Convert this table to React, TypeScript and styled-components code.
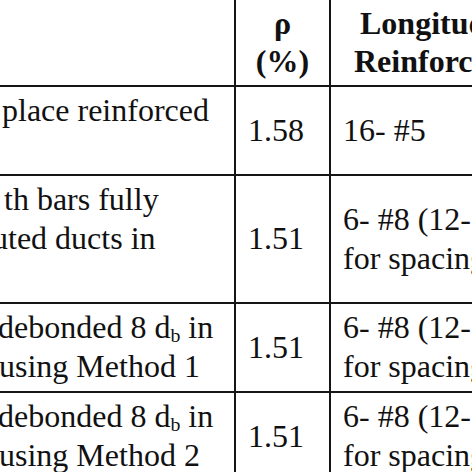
import React from 'react';
import styled, { createGlobalStyle } from 'styled-components';

const GlobalStyle = createGlobalStyle`
  html, body {
    margin: 0;
    padding: 0;
    background: #ffffff;
    overflow: hidden;
  }
`;

const serif = `'Liberation Serif', 'Times New Roman', Times, serif`;

const Page = styled.div`
  width: 472px;
  height: 472px;
  overflow: hidden;
  background: #ffffff;
`;

const Sheet = styled.div`
  margin-top: -2px;
`;

const Table = styled.table`
  border-collapse: collapse;
  table-layout: fixed;
  width: 640px;
  font-family: ${serif};
  font-size: 32px;
  line-height: 39px;
  color: #111111;
`;

const HeadCell = styled.th<{ $first?: boolean; $align?: 'left' | 'center' }>`
  font-family: ${serif};
  font-size: 32px;
  line-height: 38px;
  font-weight: bold;
  border: 2px solid #151515;
  border-top: none;
  border-left: ${(p) => (p.$first ? 'none' : '2px solid #151515')};
  padding: 6px 12px 5px;
  text-align: ${(p) => p.$align ?? 'center'};
  vertical-align: middle;
  white-space: nowrap;
  overflow: hidden;
`;

const Cell = styled.td<{ $first?: boolean }>`
  font-family: ${serif};
  font-size: 32px;
  line-height: 39px;
  border: 2px solid #151515;
  border-left: ${(p) => (p.$first ? 'none' : '2px solid #151515')};
  padding: 4px 12px 5px ${(p) => (p.$first ? 0 : 12)}px;
  text-align: left;
  vertical-align: middle;
  white-space: nowrap;
  overflow: hidden;
`;

const Line = styled.div<{ $shift?: number }>`
  display: block;
  margin-left: ${(p) => p.$shift ?? 0}px;
  min-height: 1em;
`;

const Sub = styled.sub`
  font-size: 0.62em;
  line-height: 0;
  vertical-align: -0.22em;
`;

const Db = () => (
  <>
    d<Sub>b</Sub>
  </>
);

export default function App() {
  return (
    <Page>
      <GlobalStyle />
      <Sheet>
        <Table>
          <colgroup>
            <col style={{ width: 235 }} />
            <col style={{ width: 95 }} />
            <col style={{ width: 310 }} />
          </colgroup>
          <thead>
            <tr>
              <HeadCell $first>
                <Line>&nbsp;</Line>
                <Line>&nbsp;</Line>
              </HeadCell>
              <HeadCell>
                <Line>ρ</Line>
                <Line>(%)</Line>
              </HeadCell>
              <HeadCell $align="left">
                <Line $shift={17}>Longitudinal</Line>
                <Line $shift={11}>Reinforcement</Line>
              </HeadCell>
            </tr>
          </thead>
          <tbody>
            <tr>
              <Cell $first>
                <Line $shift={2}>place reinforced</Line>
                <Line>&nbsp;</Line>
              </Cell>
              <Cell>1.58</Cell>
              <Cell>16- #5</Cell>
            </tr>
            <tr>
              <Cell $first>
                <Line $shift={4}>th bars fully</Line>
                <Line $shift={-8}>uted ducts in</Line>
                <Line>&nbsp;</Line>
              </Cell>
              <Cell>1.51</Cell>
              <Cell>
                <Line>6- #8 (12-</Line>
                <Line>for spacing</Line>
              </Cell>
            </tr>
            <tr>
              <Cell $first>
                <Line $shift={-2}>
                  debonded 8 <Db /> in
                </Line>
                <Line $shift={-1}>using Method 1</Line>
              </Cell>
              <Cell>1.51</Cell>
              <Cell>
                <Line>6- #8 (12-</Line>
                <Line>for spacing</Line>
              </Cell>
            </tr>
            <tr>
              <Cell $first>
                <Line $shift={-2}>
                  debonded 8 <Db /> in
                </Line>
                <Line $shift={-1}>using Method 2</Line>
              </Cell>
              <Cell>1.51</Cell>
              <Cell>
                <Line>6- #8 (12-</Line>
                <Line>for spacing</Line>
              </Cell>
            </tr>
          </tbody>
        </Table>
      </Sheet>
    </Page>
  );
}
